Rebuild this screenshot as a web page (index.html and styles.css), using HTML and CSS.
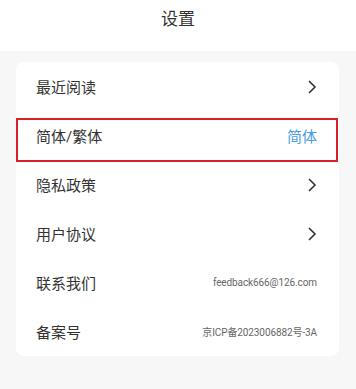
FILE: index.html
```html
<!DOCTYPE html>
<html lang="zh-CN">
<head>
    <meta charset="UTF-8">
    <meta name="viewport" content="width=device-width, initial-scale=1.0">
    <title>设置</title>
    <link rel="stylesheet" href="styles.css">
</head>
<body>
    <header class="top-bar">设置</header>

    <main class="page">
        <div class="settings-card">
            <div class="row">
                <span class="label">最近阅读</span>
                <svg class="arrow" viewBox="0 0 10 16"><path d="M2 2 L8 8 L2 14"/></svg>
            </div>
            <div class="row">
                <span class="label">简体/繁体</span>
                <span class="value blue">简体</span>
            </div>
            <div class="row">
                <span class="label">隐私政策</span>
                <svg class="arrow" viewBox="0 0 10 16"><path d="M2 2 L8 8 L2 14"/></svg>
            </div>
            <div class="row">
                <span class="label">用户协议</span>
                <svg class="arrow" viewBox="0 0 10 16"><path d="M2 2 L8 8 L2 14"/></svg>
            </div>
            <div class="row">
                <span class="label">联系我们</span>
                <span class="value small">feedback666@126.com</span>
            </div>
            <div class="row">
                <span class="label">备案号</span>
                <span class="value small">京ICP备2023006882号-3A</span>
            </div>
        </div>
        <div class="highlight"></div>
    </main>
</body>
</html>
```

FILE: styles.css
```css
* {
    margin: 0;
    padding: 0;
    box-sizing: border-box;
}

body {
    font-family: Roboto, "Noto Sans CJK SC", sans-serif;
    color: #333;
    background: #f7f7f7;
    width: 356px;
    height: 389px;
    overflow: hidden;
}

.top-bar {
    height: 51px;
    background: #fff;
    text-align: center;
    font-size: 17px;
    line-height: 39px;
    color: #333;
}

.page {
    position: relative;
    padding: 11px 17px 0 16px;
}

.settings-card {
    background: #fff;
    border-radius: 8px;
    padding: 0 20px;
}

.row {
    height: 49px;
    display: flex;
    align-items: center;
    justify-content: space-between;
}

.label {
    font-size: 15px;
    color: #333;
}

.value {
    color: #666;
}

.value.blue {
    font-size: 15px;
    color: #4a9de0;
    margin-right: 2px;
}

.value.small {
    font-size: 10px;
    letter-spacing: -0.1px;
    margin-right: 2px;
}

.arrow {
    width: 10px;
    height: 16px;
    margin-right: 2px;
}

.arrow path {
    fill: none;
    stroke: #333;
    stroke-width: 1.6;
}

/* 标注框 */
.highlight {
    position: absolute;
    top: 67px;
    left: 16px;
    width: 322px;
    height: 44px;
    border: 2px solid #d9202a;
}
```
